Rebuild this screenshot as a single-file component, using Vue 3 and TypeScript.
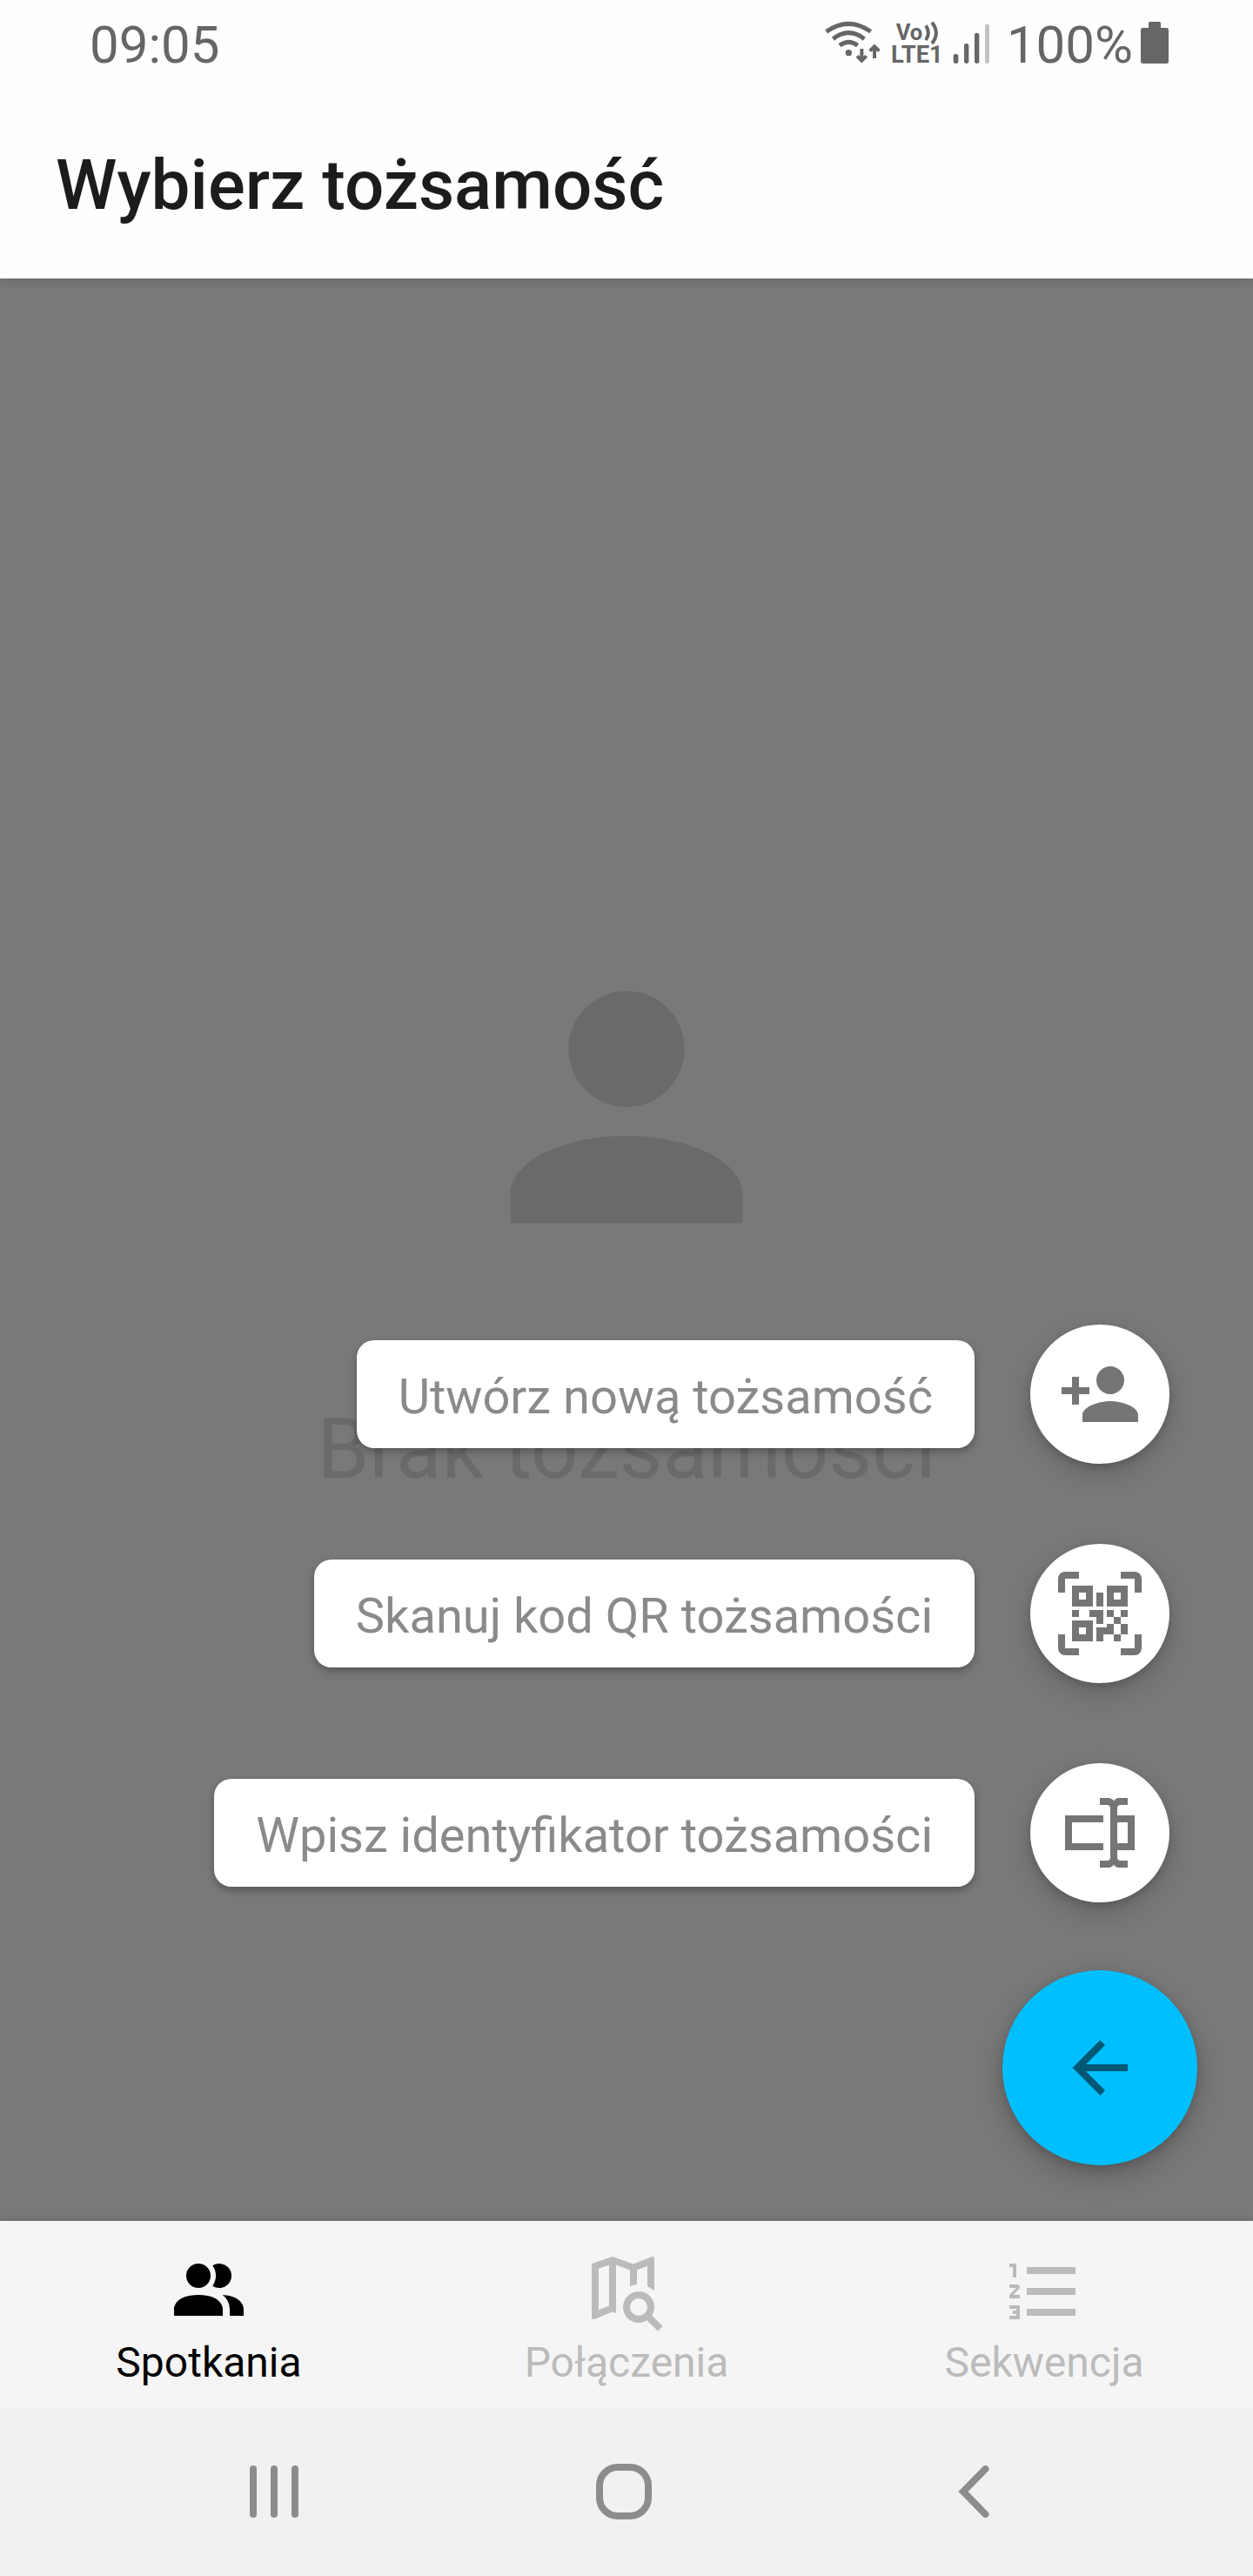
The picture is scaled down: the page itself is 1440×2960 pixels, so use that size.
<script setup lang="ts">
interface Action {
  label: string
  icon: string
}

interface Tab {
  label: string
  icon: string
  active: boolean
}

const icons = {
  account:
    'M12 4a4 4 0 0 1 4 4 4 4 0 0 1-4 4 4 4 0 0 1-4-4 4 4 0 0 1 4-4m0 10c4.42 0 8 1.79 8 4v2H4v-2c0-2.21 3.58-4 8-4z',
  accountPlus:
    'M15 14c-2.67 0-8 1.33-8 4v2h16v-2c0-2.67-5.33-4-8-4m-9-4V7H4v3H1v2h3v3h2v-3h3v-2m6 2a4 4 0 0 0 4-4 4 4 0 0 0-4-4 4 4 0 0 0-4 4 4 4 0 0 0 4 4z',
  qrScan:
    'M4 4h6v6H4zM6 6v2h2V6zM14 4h6v6h-6zM16 6v2h2V6zM4 14h6v6H4zM6 16v2h2v-2zM11 6h2v4h-2zM4 11h2v2H4zM9 11h4v4h-2v-2H9zM14 11h2v2h2v2h-2v-2h-2zM18 11h2v2h-2zM18 15h2v3h-2zM16 18h2v2h-2zM14 15h2v3h-3v2h-2v-4h3zM0 6V2a2 2 0 0 1 2-2h4v2H2v4zM18 0h4a2 2 0 0 1 2 2v4h-2V2h-4zM0 18h2v4h4v2H2a2 2 0 0 1-2-2zM22 18h2v4a2 2 0 0 1-2 2h-4v-2h4z',
  textbox:
    'M17 7h5v10h-5v2a1 1 0 0 0 1 1h2v2h-2.5c-.55 0-1.5-.45-1.5-1 0 .55-.95 1-1.5 1H12v-2h2a1 1 0 0 0 1-1V5a1 1 0 0 0-1-1h-2V2h2.5c.55 0 1.5.45 1.5 1 0-.55.95-1 1.5-1H20v2h-2a1 1 0 0 0-1 1v2M2 7h11v2H4v6h9v2H2V7m18 8V9h-3v6h3z',
  arrowLeft: 'M20 11v2H8l5.5 5.5-1.42 1.42L4.16 12l7.92-7.92L13.5 5.5 8 11h12z',
  people:
    'M16 17v2H2v-2s0-4 7-4 7 4 7 4m-3.5-9.5A3.5 3.5 0 1 0 9 11a3.5 3.5 0 0 0 3.5-3.5m3.44 5.5A5.32 5.32 0 0 1 18 17v2h4v-2s0-3.63-6.06-4M15 4a3.39 3.39 0 0 0-1.93.59 5 5 0 0 1 0 5.82A3.39 3.39 0 0 0 15 11a3.5 3.5 0 0 0 0-7z',
  mapSearch:
    'M15.5 12a4.5 4.5 0 0 1 3.81 6.9L22.39 22 21 23.39l-3.12-3.07A4.5 4.5 0 1 1 15.5 12m0 2a2.5 2.5 0 1 0 0 5 2.5 2.5 0 0 0 0-5M19.5 2a.5.5 0 0 1 .5.5v9.31a6.4 6.4 0 0 0-2-1.25V4.7l-3 1.16v4.17a6.3 6.3 0 0 0-2 .5V5.87L9 4.4v11.7c0 .78-.1 1.5.07 2.15L8 17.9l-5.34 2.07-.16.03a.5.5 0 0 1-.5-.5V4.38c0-.23.15-.41.36-.48L8 2l6 2.1 5.34-2.07zM4 5.46v11.85l3-1.16V4.45z',
  listNumbered:
    'M7 13v-2h14v2H7m0 6v-2h14v2H7M7 7V5h14v2H7M3 8V5H2V4h2v4H3m-1 9v-1h3v4H2v-1h2v-.5H3v-1h1V17H2m2.25-7a.75.75 0 0 1 .75.75c0 .2-.08.39-.21.52L3.12 13H5v1H2v-.92L4 11H2v-1h2.25z',
}

const actions: Action[] = [
  { label: 'Utwórz nową tożsamość', icon: icons.accountPlus },
  { label: 'Skanuj kod QR tożsamości', icon: icons.qrScan },
  { label: 'Wpisz identyfikator tożsamości', icon: icons.textbox },
]

const tabs: Tab[] = [
  { label: 'Spotkania', icon: icons.people, active: true },
  { label: 'Połączenia', icon: icons.mapSearch, active: false },
  { label: 'Sekwencja', icon: icons.listNumbered, active: false },
]
</script>

<template>
  <div class="screen">
    <header class="top">
      <div class="status">
        <span class="clock">09:05</span>
        <div class="indicators">
          <svg class="signals" viewBox="75 60 580 180" width="193.33" height="60">
            <g fill="none" stroke="#666" stroke-width="15">
              <path d="M83 109Q160 55 236 109" />
              <path d="M106 134Q160 92 214 134" />
              <path d="M129 157Q160 133 191 157" />
            </g>
            <circle cx="160" cy="182" r="11" fill="#666" />
            <g fill="none" stroke="#666" stroke-width="12">
              <path d="M205 168V210M189 193L205 209L221 193" />
              <path d="M249 201V160M233 176L249 160L265 176" />
            </g>
            <g fill="#666" font-family="Roboto, sans-serif" font-weight="700">
              <text x="323" y="137" font-size="80" textLength="92" lengthAdjust="spacingAndGlyphs">Vo</text>
              <text x="306" y="217" font-size="83" textLength="179" lengthAdjust="spacingAndGlyphs">LTE1</text>
            </g>
            <g fill="none" stroke="#666" stroke-width="12">
              <path d="M426 88Q443 113 426 138" />
              <path d="M447 77Q476 113 447 150" />
            </g>
            <g fill="#666">
              <rect x="521" y="186" width="17" height="33" rx="8" />
              <rect x="558" y="150" width="16" height="69" rx="8" />
              <rect x="594" y="113" width="16" height="106" rx="8" />
              <rect x="630" y="83" width="15" height="136" rx="7" fill="#c3c3c3" />
            </g>
          </svg>
          <span class="percent">100%</span>
          <svg class="battery" viewBox="0 0 32 48" width="32" height="48" fill="#666">
            <path d="M9 1.5Q9 0 10.5 0H21.5Q23 0 23 1.5V7H9z" />
            <rect x="0" y="7" width="32" height="41" rx="2.5" />
          </svg>
        </div>
      </div>
      <h1 class="title">Wybierz tożsamość</h1>
    </header>

    <main class="content">
      <div class="empty">
        <svg viewBox="0 0 24 24" width="400" height="400"><path :d="icons.account" /></svg>
        <p class="empty-text">Brak tożsamości</p>
      </div>
      <div class="dial">
        <div v-for="action in actions" :key="action.label" class="action">
          <span class="action-label">{{ action.label }}</span>
          <button class="mini">
            <svg viewBox="0 0 24 24" width="96" height="96" fill-rule="evenodd"><path :d="action.icon" /></svg>
          </button>
        </div>
        <button class="fab">
          <svg viewBox="0 0 24 24" width="96" height="96"><path :d="icons.arrowLeft" /></svg>
        </button>
      </div>
    </main>

    <nav class="tabs">
      <a v-for="tab in tabs" :key="tab.label" class="tab" :class="{ active: tab.active }">
        <svg viewBox="0 0 24 24" width="96" height="96"><path :d="tab.icon" /></svg>
        <span>{{ tab.label }}</span>
      </a>
    </nav>

    <footer class="system">
      <svg class="recents" width="56" height="60" viewBox="0 0 56 60">
        <rect width="8" height="60" rx="4" />
        <rect x="24" width="8" height="60" rx="4" />
        <rect x="48" width="8" height="60" rx="4" />
      </svg>
      <span class="home"></span>
      <svg class="back" width="36" height="60" viewBox="0 0 36 60">
        <path d="M31.5 4L6 30L31.5 56" />
      </svg>
    </footer>
  </div>
</template>

<style>
body {
  margin: 0;
}
</style>

<style scoped>
.screen {
  display: flex;
  flex-direction: column;
  width: 1440px;
  height: 2960px;
  overflow: hidden;
  background: #797979;
  font-family: Roboto, "Noto Sans", sans-serif;
}
.top {
  position: relative;
  z-index: 1;
  flex: none;
  height: 320px;
  background: #fefefe;
  box-shadow: 0 2px 12px rgba(0, 0, 0, 0.14);
}
.status {
  display: flex;
  justify-content: space-between;
  height: 96px;
  padding: 0 97px 0 103px;
  color: #666;
  font-size: 60px;
  line-height: 104px;
}
.indicators {
  display: flex;
}
.signals {
  margin-top: 20px;
}
.percent {
  margin-left: 17px;
}
.battery {
  margin: 25px 0 0 9px;
}
.title {
  margin: 70px 0 0 64px;
  color: #1c1c1e;
  font-size: 80px;
  font-weight: 500;
  line-height: 94px;
}
.content {
  position: relative;
  flex: 1;
}
.empty {
  display: flex;
  flex-direction: column;
  align-items: center;
  padding-top: 752px;
  color: #6a6a6a;
  fill: #6a6a6a;
}
.empty-text {
  margin: 137px 0 0;
  font-size: 96px;
  line-height: 112px;
  white-space: nowrap;
}
.dial {
  position: absolute;
  right: 64px;
  bottom: 64px;
  display: flex;
  flex-direction: column;
  align-items: flex-end;
}
.action {
  display: flex;
  align-items: center;
  gap: 64px;
  height: 160px;
  margin: 0 32px 92px 0;
}
.action:nth-child(3) {
  margin-bottom: 78px;
}
.action-label {
  box-sizing: border-box;
  height: 124px;
  padding: 32px 48px 0;
  border-radius: 20px;
  background: #fff;
  box-shadow: 0 4px 10px rgba(0, 0, 0, 0.3);
  color: #8a8a8a;
  font-size: 56px;
  line-height: 66px;
  white-space: nowrap;
}
.mini,
.fab {
  display: flex;
  align-items: center;
  justify-content: center;
  padding: 0;
  border: 0;
  border-radius: 50%;
}
.mini {
  width: 160px;
  height: 160px;
  background: #fff;
  fill: #757575;
  box-shadow: 0 12px 32px rgba(0, 0, 0, 0.16), 0 4px 10px rgba(0, 0, 0, 0.16);
}
.fab {
  width: 224px;
  height: 224px;
  background: #00bfff;
  fill: #005875;
  box-shadow: 0 12px 34px rgba(0, 0, 0, 0.2), 0 4px 12px rgba(0, 0, 0, 0.16);
}
.tabs {
  position: relative;
  display: flex;
  flex: none;
  height: 216px;
  background: #f5f5f5;
  box-shadow: 0 0 10px rgba(0, 0, 0, 0.14);
}
.tab {
  display: flex;
  flex: 1;
  flex-direction: column;
  align-items: center;
  padding-top: 33px;
  color: #bbb;
  fill: #bbb;
  font-size: 48px;
  line-height: 56px;
}
.tab span {
  margin-top: 6px;
}
.tab.active {
  color: #000;
  fill: #000;
}
.system {
  position: relative;
  display: flex;
  flex: none;
  align-items: center;
  box-sizing: border-box;
  height: 192px;
  padding: 0 303px 2px 287px;
  justify-content: space-between;
  background: #f1f1f1;
  fill: #8c8c8c;
}
.home {
  box-sizing: border-box;
  width: 64px;
  height: 64px;
  margin-left: -10px;
  border: 8px solid #8c8c8c;
  border-radius: 25px;
}
.back {
  fill: none;
  stroke: #8c8c8c;
  stroke-width: 8;
  stroke-linecap: round;
}
</style>
